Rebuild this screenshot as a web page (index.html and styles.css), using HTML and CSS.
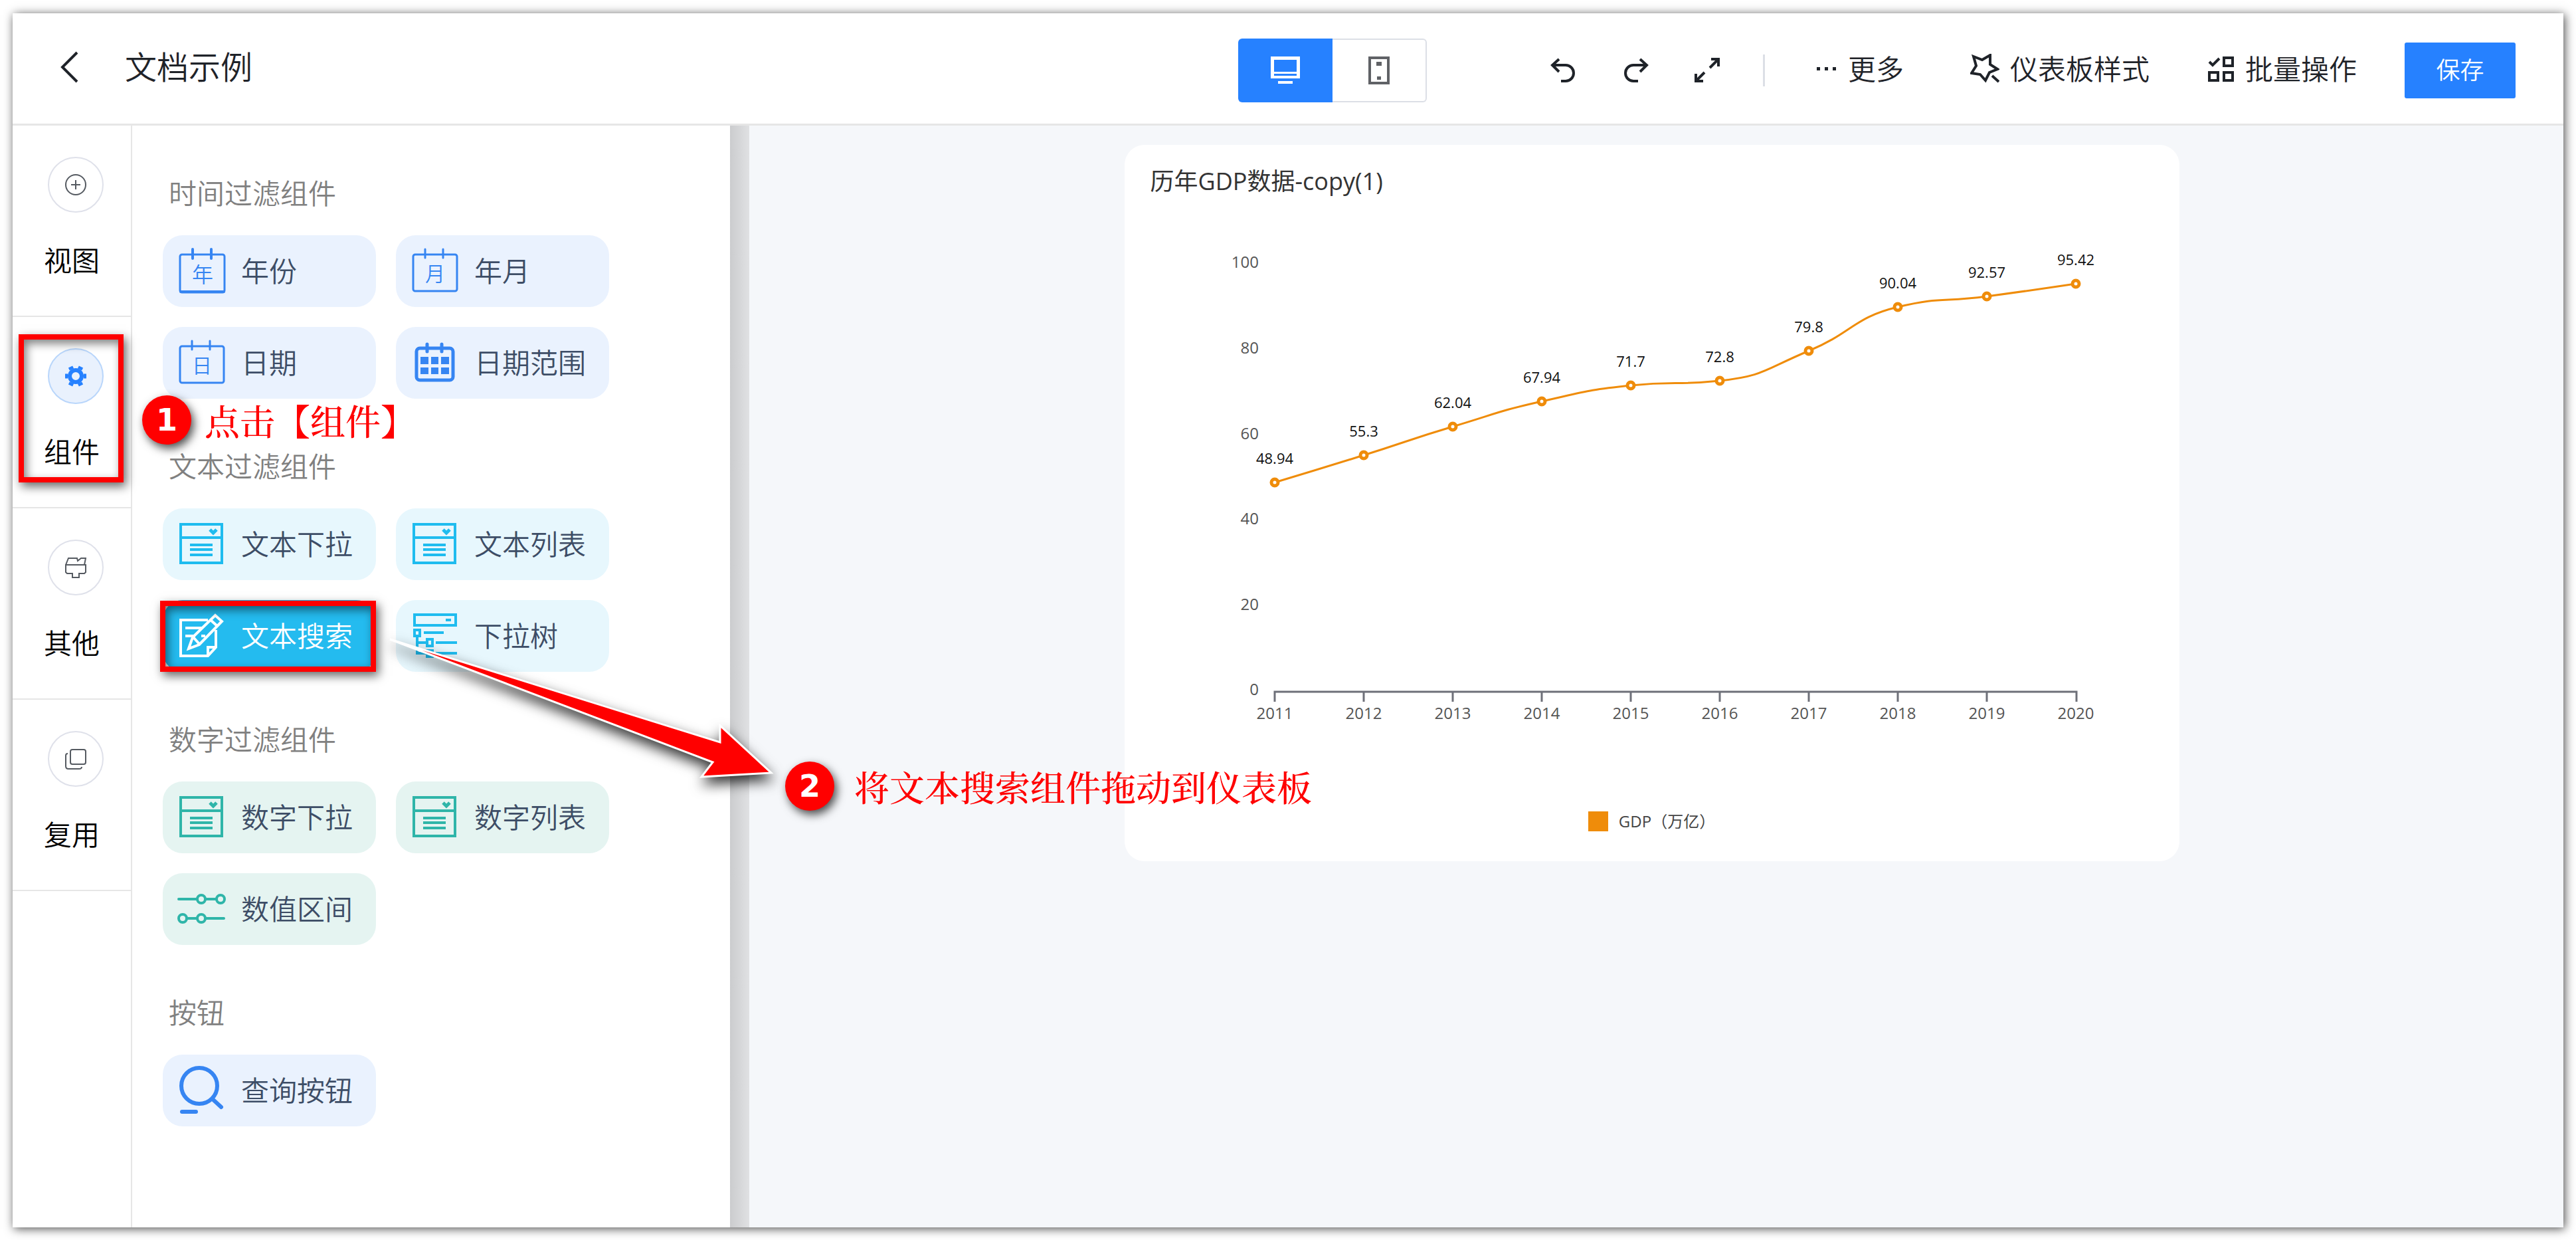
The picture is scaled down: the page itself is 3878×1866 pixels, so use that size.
FILE: index.html
```html
<!DOCTYPE html>
<html lang="zh-CN">
  <head>
    <meta charset="UTF-8" />
    <meta name="viewport" content="width=device-width, initial-scale=1.0" />
    <title>文档示例</title>
    <link rel="stylesheet" href="styles.css">
  </head>
  <body>
    <!-- shared icons -->
    <svg class="sprite" aria-hidden="true">
      <symbol id="icon-dropdown" viewBox="0 0 74 74">
        <g fill="none" stroke="currentColor" stroke-width="4">
          <rect x="5" y="7" width="62" height="58" />
          <path d="M5 27H67M19 38H53M19 45H53M19 53H53" />
          <path d="M49 15l5 5 5-5" stroke-width="5" />
        </g>
      </symbol>
    </svg>

    <div class="app">
      <header class="header">
        <button class="back" type="button" aria-label="返回">
          <svg width="28" height="50" viewBox="0 0 28 50"><path d="M25 3L3 25l22 22" /></svg>
        </button>
        <h1 class="title">文档示例</h1>

        <div class="device">
          <button class="device-btn active" type="button" aria-label="电脑">
            <svg width="44" height="44" viewBox="0 0 44 44">
              <path fill="#fff" fill-rule="evenodd" d="M0 1H44V34H0zM5 6V24H39V6zM5 27V30H39V27z" />
              <path fill="#fff" d="M11 38H33V42H11z" />
            </svg>
          </button>
          <button class="device-btn" type="button" aria-label="手机">
            <svg width="32" height="44" viewBox="0 0 32 44">
              <rect x="2" y="3" width="28" height="38" fill="none" stroke="#606266" stroke-width="4" />
              <path fill="#606266" d="M12 9h8v6h-8zM13 31h6v5h-6z" />
            </svg>
          </button>
        </div>

        <div class="tools">
          <button class="tool" type="button" aria-label="撤销">
            <svg width="42" height="42" viewBox="0 0 42 42"><path d="M14 4L4 13l10 10M4 13H24a12 12 0 0 1 0 24H17" /></svg>
          </button>
          <button class="tool" type="button" aria-label="重做">
            <svg width="42" height="42" viewBox="0 0 42 42"><path d="M28 4l10 9-10 10M38 13H18a12 12 0 0 0 0 24H25" /></svg>
          </button>
          <button class="tool" type="button" aria-label="全屏">
            <svg width="42" height="42" viewBox="0 0 42 42"><path d="M27 4H38V15M38 4L25 17M4 26V37H15M4 37L17 24" /></svg>
          </button>
        </div>
        <span class="divider"></span>
        <button class="menu-btn more" type="button">
          <svg width="32" height="40" viewBox="0 0 32 40"><path fill="#1f2329" stroke="none" d="M1 17h5v5H1zM13 17h5v5h-5zM25 17h5v5h-5z" /></svg>
          更多
        </button>
        <button class="menu-btn" type="button">
          <svg width="44" height="46" viewBox="0 0 44 46"><path d="M5 4L18 9 30 2V16L41 23 29 28 23 40 15 31 2 29 9 18zM33 33L43 42" /></svg>
          仪表板样式
        </button>
        <button class="menu-btn" type="button">
          <svg width="40" height="40" viewBox="0 0 40 40"><path d="M2 9l5 5 10-10M24 3H37V15H24zM2 25H15V37H2zM24 25H37V37H24z" /></svg>
          批量操作
        </button>
        <button class="save" type="button">保存</button>
      </header>

      <main class="main">
        <nav class="rail">
          <button class="rail-item" type="button">
            <span class="rail-icon">
              <svg width="32" height="32" viewBox="0 0 32 32"><circle cx="16" cy="16" r="15" /><path d="M16 9V23M9 16H23" /></svg>
            </span>
            视图
          </button>
          <button class="rail-item active" type="button">
            <span class="rail-icon">
              <svg width="32" height="32" viewBox="0 0 32 32">
                <circle cx="16" cy="16" r="9" stroke-width="6" />
                <path stroke-width="7" d="M28 16h4M0 16h4M22 26l2 4M10 26l-2 4M22 6l2-4M10 6L8 2" />
              </svg>
            </span>
            组件
            <span class="mark mark-rail"></span>
          </button>
          <button class="rail-item" type="button">
            <span class="rail-icon">
              <svg width="32" height="32" viewBox="0 0 32 32"><path d="M1 12L5 2H18l1 4 5-4H31L29 12M1 12H31V23L29 25H21V31H11V25H3L1 23z" /></svg>
            </span>
            其他
          </button>
          <button class="rail-item" type="button">
            <span class="rail-icon">
              <svg width="32" height="32" viewBox="0 0 32 32"><rect x="8" y="2" width="23" height="22" rx="3" /><path d="M4 8Q1 8 1 11V27Q1 31 5 31H21Q25 31 25 28" /></svg>
            </span>
            复用
          </button>
        </nav>

        <aside class="panel">
          <section class="group">
            <h2>时间过滤组件</h2>
            <div class="chips">
              <button class="chip time" type="button">
                <svg width="74" height="74" viewBox="0 0 74 74">
                  <g fill="none" stroke="currentColor" stroke-width="4" stroke-linecap="round">
                    <rect x="4" y="12" width="67" height="57" rx="3" stroke-width="3" />
                    <path d="M23 4V18M51 4V18M5 68H70" />
                  </g>
                  <text x="38" y="54" font-size="32" fill="currentColor" text-anchor="middle">年</text>
                </svg>
                年份
              </button>
              <button class="chip time" type="button">
                <svg width="74" height="74" viewBox="0 0 74 74">
                  <g fill="none" stroke="currentColor" stroke-width="3" stroke-linecap="round">
                    <rect x="4" y="12" width="66" height="55" rx="3" />
                    <path d="M22 4V17M49 4V17" />
                  </g>
                  <text x="37" y="52" font-size="30" fill="currentColor" text-anchor="middle">月</text>
                </svg>
                年月
              </button>
              <button class="chip time" type="button">
                <svg width="74" height="74" viewBox="0 0 74 74">
                  <g fill="none" stroke="currentColor" stroke-width="3" stroke-linecap="round">
                    <rect x="4" y="12" width="66" height="55" rx="3" />
                    <path d="M22 4V17M49 4V17" />
                  </g>
                  <text x="37" y="52" font-size="30" fill="currentColor" text-anchor="middle">日</text>
                </svg>
                日期
              </button>
              <button class="chip time" type="button">
                <svg width="74" height="74" viewBox="0 0 74 74">
                  <g fill="none" stroke="currentColor" stroke-width="5" stroke-linecap="round">
                    <rect x="9" y="15" width="55" height="48" rx="5" />
                    <path d="M25 9V20M47 9V20" />
                  </g>
                  <path fill="currentColor" d="M15 28h12v11H15zM31 28h11v11H31zM46 28h12v11H46zM15 44h12v10H15zM31 44h11v10H31zM46 44h12v10H46z" />
                </svg>
                日期范围
              </button>
            </div>
          </section>

          <section class="group">
            <h2>文本过滤组件</h2>
            <div class="chips">
              <button class="chip text" type="button">
                <svg width="74" height="74"><use href="#icon-dropdown" /></svg>
                文本下拉
              </button>
              <button class="chip text" type="button">
                <svg width="74" height="74"><use href="#icon-dropdown" /></svg>
                文本列表
              </button>
              <button class="chip text selected" type="button">
                <svg width="74" height="74" viewBox="0 0 74 74">
                  <g fill="none" stroke="currentColor" stroke-width="4">
                    <path d="M46 13H5V67H46L58 54V28M46 66V54H57" />
                    <path d="M12 25H37M12 37H27M36 37H42" />
                    <path d="M17 56L23 39 57 6 67 15 33 50zM24 39L33 49M50 13L60 22" />
                  </g>
                </svg>
                文本搜索
                <span class="mark mark-chip"></span>
              </button>
              <button class="chip text" type="button">
                <svg width="74" height="74" viewBox="0 0 74 74">
                  <g fill="none" stroke="currentColor" stroke-width="4">
                    <rect x="6" y="5" width="62" height="16" />
                    <path d="M53 13H61M20 32H50M38 47H70M38 63H70" />
                    <path d="M6 28H14V37H6zM25 42H33V52H25zM25 59H33V68H25zM10 37V63H25M10 47H25" />
                  </g>
                </svg>
                下拉树
              </button>
            </div>
          </section>

          <section class="group">
            <h2>数字过滤组件</h2>
            <div class="chips">
              <button class="chip number" type="button">
                <svg width="74" height="74"><use href="#icon-dropdown" /></svg>
                数字下拉
              </button>
              <button class="chip number" type="button">
                <svg width="74" height="74"><use href="#icon-dropdown" /></svg>
                数字列表
              </button>
              <button class="chip number" type="button">
                <svg width="74" height="74" viewBox="0 0 74 74">
                  <g fill="none" stroke="currentColor" stroke-width="4" stroke-linecap="round">
                    <path d="M2 22H30M43 22H58M15 51H30M43 51H70" />
                    <circle cx="36" cy="22" r="6" /><circle cx="65" cy="22" r="6" />
                    <circle cx="8" cy="51" r="6" /><circle cx="36" cy="51" r="6" />
                  </g>
                </svg>
                数值区间
              </button>
            </div>
          </section>

          <section class="group">
            <h2>按钮</h2>
            <div class="chips">
              <button class="chip time" type="button">
                <svg width="74" height="74" viewBox="0 0 74 74">
                  <g fill="none" stroke="currentColor" stroke-width="6" stroke-linecap="round">
                    <circle cx="33" cy="30" r="27" />
                    <path d="M53 50L66 62M7 69H28" />
                  </g>
                </svg>
                查询按钮
              </button>
            </div>
          </section>
        </aside>

        <div class="splitter"></div>

        <div class="canvas">
          <article class="card">
            <h2>历年GDP数据-copy(1)</h2>
            <svg class="chart" viewBox="0 0 1588 920">
              <g class="y-labels">
                <text x="202" y="105">100</text>
                <text x="202" y="234">80</text>
                <text x="202" y="363">60</text>
                <text x="202" y="491">40</text>
                <text x="202" y="620">20</text>
                <text x="202" y="748">0</text>
              </g>
              <path class="axis" d="M226 758V743H1433V758M360 743V758M494 743V758M628 743V758M762 743V758M896 743V758M1030 743V758M1164 743V758M1298 743V758" />
              <g class="x-labels">
                <text x="226" y="784">2011</text>
                <text x="360" y="784">2012</text>
                <text x="494" y="784">2013</text>
                <text x="628" y="784">2014</text>
                <text x="762" y="784">2015</text>
                <text x="896" y="784">2016</text>
                <text x="1030" y="784">2017</text>
                <text x="1164" y="784">2018</text>
                <text x="1298" y="784">2019</text>
                <text x="1432" y="784">2020</text>
              </g>
              <path class="line" d="M226 428C226 428 293 408 360 387C427 366 427 364 494 344C561 324 561 321 628 306C695 291 695 289 762 282C829 275 829 282 896 275C963 268 963 258 1030 230C1097 202 1097 180 1164 164C1231 148 1231 157 1298 148C1365 139 1432 129 1432 129" />
              <g class="dots">
                <circle cx="226" cy="428" r="5" />
                <circle cx="360" cy="387" r="5" />
                <circle cx="494" cy="344" r="5" />
                <circle cx="628" cy="306" r="5" />
                <circle cx="762" cy="282" r="5" />
                <circle cx="896" cy="275" r="5" />
                <circle cx="1030" cy="230" r="5" />
                <circle cx="1164" cy="164" r="5" />
                <circle cx="1298" cy="148" r="5" />
                <circle cx="1432" cy="129" r="5" />
              </g>
              <g class="values">
                <text x="226" y="400">48.94</text>
                <text x="360" y="359">55.3</text>
                <text x="494" y="316">62.04</text>
                <text x="628" y="278">67.94</text>
                <text x="762" y="254">71.7</text>
                <text x="896" y="247">72.8</text>
                <text x="1030" y="202">79.8</text>
                <text x="1164" y="136">90.04</text>
                <text x="1298" y="120">92.57</text>
                <text x="1432" y="101">95.42</text>
              </g>
            </svg>
            <div class="legend"><span class="swatch"></span>GDP（万亿）</div>
          </article>
        </div>
      </main>

      <!-- guide steps drawn over the editor -->
      <div class="step step-1"><span class="badge">1</span>点击【组件】</div>
      <svg class="arrow" width="600" height="230" viewBox="0 0 600 230">
        <path d="M8 12L505 167V142L582 213 477 219 494 197z" />
      </svg>
      <div class="step step-2"><span class="badge">2</span>将文本搜索组件拖动到仪表板</div>
    </div>
  </body>
</html>
```
FILE: styles.css
```css
* {
  box-sizing: border-box;
}

body {
  margin: 0;
  padding: 20px 19px 19px;
  min-height: 100vh;
  display: flex;
  background: #fff;
  color: #1f2329;
  font-family: 'Open Sans', 'Noto Sans CJK SC', sans-serif;
  font-size: 42px;
  font-weight: 350;
  line-height: 60px;
}

button {
  margin: 0;
  padding: 0;
  border: 0;
  background: none;
  color: inherit;
  font: inherit;
  cursor: pointer;
}

svg {
  flex: none;
}

.sprite {
  position: absolute;
  width: 0;
  height: 0;
}

.app {
  position: relative;
  flex: 1;
  display: flex;
  flex-direction: column;
  background: #fff;
  box-shadow: 2px 2px 14px rgba(0, 0, 0, 0.7);
}

/* header */
.header {
  display: flex;
  align-items: center;
  height: 169px;
  padding: 6px 72px 0;
  border-bottom: 3px solid #e6e6e6;
}

.header svg {
  display: block;
  fill: none;
  stroke: #1f2329;
  stroke-width: 4;
}

.back {
  padding-bottom: 10px;
}

.title {
  margin: 0 0 0 69px;
  padding-bottom: 10px;
  font-size: 48px;
  font-weight: 350;
}

.device {
  display: flex;
  margin-left: auto;
  margin-right: 185px;
}

.device-btn {
  display: flex;
  align-items: center;
  justify-content: center;
  width: 142px;
  height: 96px;
  border: 2px solid #dcdfe6;
  border-left: 0;
  border-radius: 0 6px 6px 0;
}

.device-btn.active {
  border: 0;
  border-radius: 6px 0 0 6px;
  background: #2681ff;
}

.device-btn svg {
  stroke: none;
}

.tools {
  display: flex;
  gap: 66px;
}

.divider {
  width: 3px;
  height: 48px;
  margin-left: 63px;
  background: #dcdfe6;
}

.menu-btn {
  display: flex;
  align-items: center;
  gap: 16px;
  margin-left: 88px;
  padding-bottom: 4px;
}

.menu-btn.more {
  margin-left: 77px;
  margin-right: 12px;
}

.save {
  width: 167px;
  height: 84px;
  margin-left: 72px;
  border-radius: 3px;
  background: #2681ff;
  color: #fff;
  font-size: 36px;
}

/* left navigation */
.main {
  flex: 1;
  display: flex;
}

.rail {
  width: 180px;
  border-right: 2px solid #e6e6e6;
}

.rail-item {
  position: relative;
  display: flex;
  flex-direction: column;
  align-items: center;
  gap: 42px;
  width: 100%;
  height: 288px;
  padding-top: 47px;
  border-bottom: 2px solid #e6e6e6;
  color: #000;
}

.rail-icon {
  display: flex;
  align-items: center;
  justify-content: center;
  width: 84px;
  height: 84px;
  margin-left: 12px;
  border: 2px solid #dfe1ea;
  border-radius: 50%;
}

.rail-icon svg {
  fill: none;
  stroke: #555a61;
  stroke-width: 2;
}

.rail-item.active .rail-icon {
  border-color: #b9d6fb;
  background: #e9f1fd;
}

.rail-item.active svg {
  stroke: #2681ff;
}

/* component panel */
.panel {
  width: 900px;
  padding: 72px 0 0 46px;
}

.group {
  margin-bottom: 72px;
}

.group h2 {
  margin: 0 0 33px 9px;
  color: #808080;
  font-size: 42px;
  font-weight: 350;
}

.chips {
  display: grid;
  grid-template-columns: 321px 321px;
  gap: 30px;
}

.chip {
  position: relative;
  display: flex;
  align-items: center;
  gap: 22px;
  height: 108px;
  padding-left: 22px;
  border-radius: 30px;
  color: #3d4d66;
}

.chip.time {
  background: #eaf2fe;
}

.chip.text {
  background: #e7f7fd;
}

.chip.number {
  background: #e5f4f1;
}

.chip.time svg {
  color: #3685f2;
}

.chip.text svg {
  color: #1fbcef;
}

.chip.number svg {
  color: #2fb5a9;
}

.chip.selected,
.chip.selected svg {
  background: #24bbef;
  color: #fff;
}

.splitter {
  width: 29px;
  background: linear-gradient(to right, #cbccce, #e0e1e3);
}

/* dashboard */
.canvas {
  flex: 1;
  padding: 29px 14px 0 0;
  background: #f5f7fa;
}

.card {
  max-width: 1588px;
  margin: 0 auto;
  padding: 30px 0 42px;
  border-radius: 30px;
  background: #fff;
}

.card h2 {
  margin: 0 39px;
  color: #333;
  font-size: 36px;
  font-weight: 400;
  line-height: 50px;
}

.chart {
  display: block;
  width: 100%;
  font-size: 24px;
  font-weight: 400;
}

.y-labels,
.x-labels {
  fill: #555;
  text-anchor: middle;
}

.y-labels {
  text-anchor: end;
}

.axis {
  fill: none;
  stroke: #6e7079;
  stroke-width: 3;
}

.line {
  fill: none;
  stroke: #ef8c0a;
  stroke-width: 3;
}

.dots {
  fill: #fff;
  stroke: #ef8c0a;
  stroke-width: 5;
}

.values {
  fill: #111;
  font-size: 22px;
  text-anchor: middle;
}

.legend {
  display: flex;
  align-items: center;
  justify-content: center;
  gap: 16px;
  color: #444;
  font-size: 24px;
  font-weight: 400;
  line-height: 36px;
}

.swatch {
  width: 30px;
  height: 30px;
  background: #ef8c0a;
}

/* guide marks */
.mark {
  position: absolute;
  border: 8px solid #f00;
  box-shadow: 4px 6px 14px rgba(0, 0, 0, 0.6), inset 4px 6px 14px rgba(0, 0, 0, 0.5);
}

.mark-rail {
  top: 26px;
  left: 9px;
  right: 11px;
  height: 223px;
}

.mark-chip {
  inset: 1px 0 0 -4px;
}

.step {
  position: absolute;
  display: flex;
  align-items: center;
  color: #f00;
  font-family: 'Noto Serif CJK SC', 'Noto Sans CJK SC', serif;
  font-size: 53px;
  font-weight: 500;
  line-height: 74px;
}

.badge {
  width: 74px;
  height: 74px;
  border-radius: 50%;
  background: #f00;
  box-shadow: 4px 6px 14px rgba(0, 0, 0, 0.7);
  color: #fff;
  font-family: 'DejaVu Sans', sans-serif;
  font-size: 46px;
  font-weight: 700;
  text-align: center;
}

.step-1 {
  top: 575px;
  left: 195px;
  gap: 20px;
}

.step-2 {
  top: 1126px;
  left: 1163px;
  gap: 30px;
}

.arrow {
  position: absolute;
  top: 930px;
  left: 560px;
  overflow: visible;
  fill: #f00;
  stroke: #fff;
  stroke-width: 3;
  filter: drop-shadow(2px 10px 10px rgba(0, 0, 0, 0.8));
}
```
